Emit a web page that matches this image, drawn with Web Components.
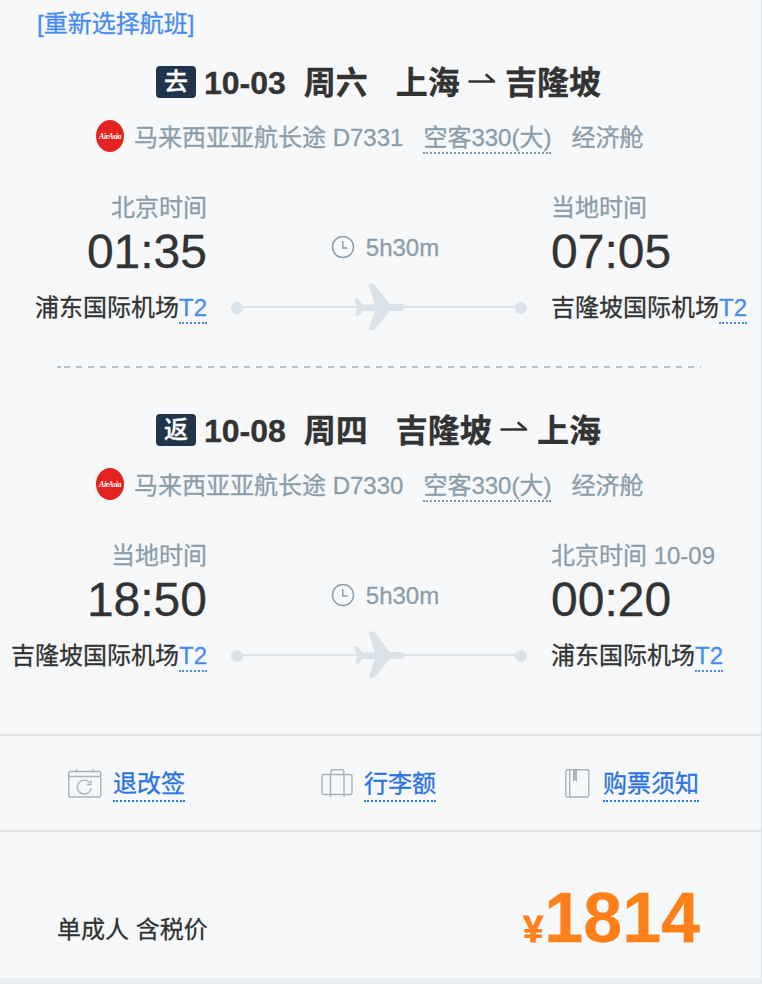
<!DOCTYPE html>
<html lang="zh-CN">
<head>
<meta charset="UTF-8">
<title>航班信息</title>
<style>
    body {
        margin: 0;
        background: #e9eef2;
        font-family: "Liberation Sans", "Noto Sans CJK SC", sans-serif;
        font-size: 24px;
        color: #333;
        -webkit-text-stroke: 0.3px;
    }
</style>
</head>
<body>
<flight-card>
    <flight-leg type="去" date="10-03" week="周六" from="上海" to="吉隆坡" flight="D7331"
        dep-label="北京时间" dep-time="01:35" dep-airport="浦东国际机场"
        arr-label="当地时间" arr-time="07:05" arr-airport="吉隆坡国际机场"></flight-leg>
    <dashed-line></dashed-line>
    <flight-leg type="返" date="10-08" week="周四" from="吉隆坡" to="上海" flight="D7330"
        dep-label="当地时间" dep-time="18:50" dep-airport="吉隆坡国际机场"
        arr-label="北京时间 10-09" arr-time="00:20" arr-airport="浦东国际机场"></flight-leg>
    <action-bar slot="footer"></action-bar>
    <price-bar slot="footer" amount="1814">单成人 含税价</price-bar>
</flight-card>

<script>
class FlightCard extends HTMLElement {
    connectedCallback() {
        this.attachShadow({ mode: 'open' }).innerHTML = `
            <style>
                :host {
                    display: flex;
                    flex-direction: column;
                    box-sizing: border-box;
                    width: 762px;
                    height: 978px;
                    background: #f6f8fa;
                    border-right: 1px solid #d3dde4;
                }
                .top { height: 49px; line-height: 47px; padding-left: 37px; }
                .top a { color: #468cf0; }
                .legs { height: 685px; }
            </style>
            <div class="top"><a>[重新选择航班]</a></div>
            <div class="legs"><slot></slot></div>
            <slot name="footer"></slot>
        `;
    }
}

class AirportInfo extends HTMLElement {
    connectedCallback() {
        this.attachShadow({ mode: 'open' }).innerHTML = `
            <style>
                :host { display: block; white-space: nowrap; }
                .label { line-height: 36px; color: #8c9eaa; }
                .time { font-size: 48px; line-height: 52px; }
                .airport { line-height: 30px; height: 31px; margin-top: 15px; display: flex; }
                :host([align="right"]) { text-align: right; }
                :host([align="right"]) .airport { justify-content: flex-end; }
                .terminal { height: 29px; color: #468cf0; border-bottom: 2px dotted #468cf0; }
            </style>
            <div class="label">${this.getAttribute('label')}</div>
            <div class="time">${this.getAttribute('time')}</div>
            <div class="airport"><span>${this.getAttribute('airport')}</span><span class="terminal">T2</span></div>
        `;
    }
}

class FlightPath extends HTMLElement {
    connectedCallback() {
        this.attachShadow({ mode: 'open' }).innerHTML = `
            <style>
                :host { display: block; padding-top: 42px; color: #8c9eaa; }
                .duration { display: flex; justify-content: center; align-items: center; gap: 11px; line-height: 32px; height: 32px; padding-left: 12px; }
                svg { display: block; }
                .path { margin-top: 18px; }
            </style>
            <div class="duration">
                <svg width="24" height="24" viewBox="0 0 24 24" fill="none" stroke="#8c9eaa" stroke-width="1.5">
                    <circle cx="12" cy="11" r="10.5"/><path d="M11.8 5v7h4.7"/>
                </svg>
                <span>5h30m</span>
            </div>
            <svg class="path" width="296" height="52" viewBox="0 0 296 52" fill="#dae2ea">
                <rect x="6" y="24" width="284" height="2"/>
                <circle cx="6" cy="26" r="6"/><circle cx="290" cy="26" r="6"/>
                <path d="M123.500 16.500h3q1.500.5 2 2l3 4h12.500l-6.500-19.500q0-1.500 2-1.500h2q2 0 3 2l14 18.500h12q2.500.5 2.500 3.500t-2.500 3.500h-12l-14 17.500q-1 1.500-3 1.500h-2q-2 0-1.500-2l6-17h-12l-4 4.500h-3q-1 0-.5-1.500l2-6-3-8q-.5-1.500 0-1.500z"/>
            </svg>
        `;
    }
}

class FlightLeg extends HTMLElement {
    connectedCallback() {
        const attr = name => this.getAttribute(name);
        this.attachShadow({ mode: 'open' }).innerHTML = `
            <style>
                :host { display: block; height: 317px; white-space: nowrap; }
                .title {
                    display: flex;
                    align-items: center;
                    height: 48px;
                    padding: 9px 0 0 156px;
                    font-size: 32px;
                    line-height: 48px;
                    font-weight: bold;
                }
                .title span:not(.badge) { padding-top: 2px; }
                .badge {
                    width: 40px;
                    height: 32px;
                    margin-right: 8px;
                    border-radius: 4px;
                    background: #20344a;
                    color: #fff;
                    font-size: 24px;
                    font-weight: 500;
                    line-height: 32px;
                    text-align: center;
                }
                .week { margin: 0 28px 0 18px; }
                .arrow { margin: -4px 9px 0 8px; }
                .plane {
                    display: flex;
                    align-items: center;
                    height: 32px;
                    margin-top: 14px;
                    padding-left: 96px;
                    line-height: 30px;
                    color: #8c9eaa;
                }
                .plane > span { margin-top: 3px; }
                .plane .flight { margin-left: 10px; margin-right: 20px; }
                .plane .model { height: 29px; border-bottom: 2px dotted #8298a8; margin-top: 4px; margin-right: 20px; }
                .route {
                    display: grid;
                    grid-template-columns: 207px 296px auto;
                    gap: 24px;
                    margin-top: 38px;
                }
            </style>
            <div class="title">
                <span class="badge">${attr('type')}</span>
                <span>${attr('date')}</span>
                <span class="week">${attr('week')}</span>
                <span>${attr('from')}</span>
                <svg class="arrow" width="28" height="16" viewBox="0 0 28 16" fill="none" stroke="#333" stroke-width="2.6" stroke-linecap="round" stroke-linejoin="round">
                    <path d="M1.500 9.500h24.500L18.500 3"/>
                </svg>
                <span>${attr('to')}</span>
            </div>
            <div class="plane">
                <svg width="28" height="32" viewBox="0 0 28 32" overflow="visible">
                    <ellipse cx="14" cy="16" rx="14" ry="16" fill="#e2231f"/>
                    <text x="14" y="19" text-anchor="middle" font-family="Liberation Serif" font-size="8" letter-spacing="-.5" font-style="italic" font-weight="bold" fill="#fff">AirAsia</text>
                </svg>
                <span class="flight">马来西亚亚航长途 ${attr('flight')}</span>
                <span class="model">空客330(大)</span>
                <span>经济舱</span>
            </div>
            <div class="route">
                <airport-info align="right" label="${attr('dep-label')}" time="${attr('dep-time')}" airport="${attr('dep-airport')}"></airport-info>
                <flight-path></flight-path>
                <airport-info label="${attr('arr-label')}" time="${attr('arr-time')}" airport="${attr('arr-airport')}"></airport-info>
            </div>
        `;
    }
}

class DashedLine extends HTMLElement {
    connectedCallback() {
        this.attachShadow({ mode: 'open' }).innerHTML = `
            <style>
                :host {
                    display: block;
                    width: 644px;
                    height: 2px;
                    margin: 0 0 29px 57px;
                    background:
                        linear-gradient(#b8c3d0, #b8c3d0) 0 0 / 4px 2px no-repeat,
                        repeating-linear-gradient(90deg, #b8c3d0 0 6px, transparent 6px 12px) 7px 0 / 100% 2px no-repeat;
                }
            </style>
        `;
    }
}

class ActionBar extends HTMLElement {
    connectedCallback() {
        this.attachShadow({ mode: 'open' }).innerHTML = `
            <style>
                :host {
                    display: flex;
                    box-sizing: border-box;
                    height: 98px;
                    padding: 33px 62px 0 67px;
                    border-top: 2px solid #dfe3e6;
                    border-bottom: 2px solid #dfe3e6;
                }
                .item { display: flex; }
                .item:nth-of-type(2) { margin: 0 auto 0 136px; }
                svg { display: block; fill: none; stroke: #a9b3b8; stroke-width: 1.4; }
                a { height: 31px; line-height: 29px; color: #2b73e4; border-bottom: 2px dotted #2b78dc; }
            </style>
            <div class="item">
                <svg width="46" height="30" viewBox="0 0 46 30">
                    <rect x="1.7" y="2.5" width="32" height="25.5" rx="1.5"/>
                    <path d="M2 7.5h31.5M9.500 0v3.5M26 0v3.5M22.500 13.500A7 7 0 1 0 24.2 19M23.8 11.5v4h-4.3"/>
                </svg>
                <a>退改签</a>
            </div>
            <div class="item">
                <svg width="43" height="30" viewBox="0 0 43 30">
                    <rect x="1" y="5.5" width="30" height="20" rx="2"/>
                    <path d="M9.500 28V5.500M23 28V5.500M10 5.500V2q0-1.3 1.3-1.3h10Q22.7.7 22.7 2v3.500"/>
                </svg>
                <a>行李额</a>
            </div>
            <div class="item">
                <svg width="38" height="30" viewBox="0 0 38 30">
                    <rect x=".8" y=".7" width="23" height="27.3" rx="1.5"/>
                    <path d="M4.700 1v27"/>
                    <path d="M8 1h4v12l-2-2-2 2z" fill="#a9b3b8" stroke="none"/>
                </svg>
                <a>购票须知</a>
            </div>
        `;
    }
}

class PriceBar extends HTMLElement {
    connectedCallback() {
        this.attachShadow({ mode: 'open' }).innerHTML = `
            <style>
                :host {
                    display: flex;
                    justify-content: space-between;
                    align-items: flex-start;
                    padding: 46px 61px 0 57px;
                }
                .label { line-height: 30px; padding-top: 37px; }
                .price { color: #ff8019; font-weight: bold; font-size: 70px; line-height: 80px; white-space: nowrap; }
                .price small { font-size: 36px; margin-right: 1px; -webkit-text-stroke: 0.8px; }
            </style>
            <span class="label"><slot></slot></span>
            <span class="price"><small>¥</small>${this.getAttribute('amount')}</span>
        `;
    }
}

customElements.define('flight-card', FlightCard);
customElements.define('airport-info', AirportInfo);
customElements.define('flight-path', FlightPath);
customElements.define('flight-leg', FlightLeg);
customElements.define('dashed-line', DashedLine);
customElements.define('action-bar', ActionBar);
customElements.define('price-bar', PriceBar);
</script>
</body>
</html>
